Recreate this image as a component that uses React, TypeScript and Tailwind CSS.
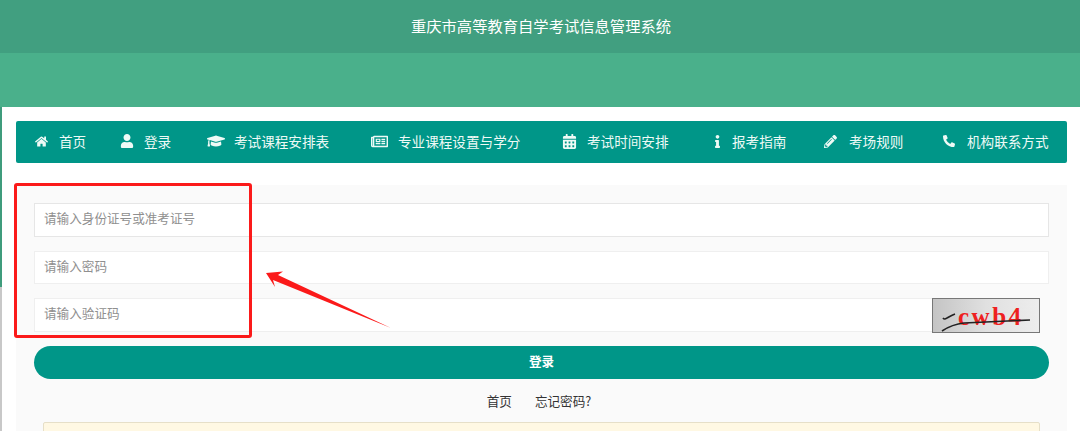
import React from "react";
import {
  FaCalendarAlt,
  FaGraduationCap,
  FaHome,
  FaInfo,
  FaPencilAlt,
  FaPhoneAlt,
  FaRegNewspaper,
  FaUser,
} from "react-icons/fa";

const navItems = [
  { label: "首页", icon: FaHome, box: "w-[24px]", size: 13, width: "w-[85px]" },
  { label: "登录", icon: FaUser, box: "w-[24px]", size: 14, width: "w-[87px]" },
  { label: "考试课程安排表", icon: FaGraduationCap, box: "w-[27px]", size: 18, width: "w-[164px]" },
  { label: "专业课程设置与学分", icon: FaRegNewspaper, box: "w-[27px]", size: 17, width: "w-[191px]" },
  { label: "考试时间安排", icon: FaCalendarAlt, box: "w-[25px]", size: 15, width: "w-[149px]" },
  { label: "报考指南", icon: FaInfo, box: "w-[21px]", size: 13, width: "w-[113px]" },
  { label: "考场规则", icon: FaPencilAlt, box: "w-[25px]", size: 13, width: "w-[119px]" },
  { label: "机构联系方式", icon: FaPhoneAlt, box: "w-[24px]", size: 12, width: "w-[107px]" },
];

const Captcha = () => (
  <svg width="108" height="35" viewBox="0 0 108 35" className="shrink-0">
    <defs>
      <linearGradient id="captchaBg" x1="0" y1="0" x2="1" y2="0">
        <stop offset="0" stopColor="#c4c4c4" />
        <stop offset="0.5" stopColor="#e0e0e0" />
        <stop offset="1" stopColor="#ededed" />
      </linearGradient>
    </defs>
    <rect x="0.5" y="0.5" width="107" height="34" fill="url(#captchaBg)" stroke="#777" />
    <text
      x="26"
      y="27"
      fill="#ee2020"
      fontSize="25"
      fontWeight="bold"
      letterSpacing="2.5"
      fontFamily="'Liberation Serif', serif"
    >
      cwb4
    </text>
    <path
      d="M11 20 C13 23 15 19 23 16 M10 33 C16 29 22 26 32 25 L98 22"
      fill="none"
      stroke="#222"
      strokeWidth="1.6"
    />
  </svg>
);

const App = () => {
  return (
    <div className="relative h-[431px] w-[1080px] overflow-hidden bg-white font-['Noto_Sans_CJK_SC','Noto_Sans',sans-serif] text-[14px]">
      <header className="flex h-[53px] items-center justify-center bg-[#419f80] pb-[3px] pl-[2px] text-[15.3px] text-white">
        重庆市高等教育自学考试信息管理系统
      </header>
      <div className="h-[54px] bg-[#4ab08b]" />

      <div className="flex h-[324px]">
        <div className="flex w-[2px] flex-col">
          <div className="h-[180px] bg-[#3f9c7c]" />
          <div className="flex-1 bg-[#c8c8c8]" />
        </div>

        <main className="w-[1065px] pl-[14px] pt-[14px]">
          <nav className="flex h-[42px] items-center rounded-[2px] bg-[#009688] pb-[2px] pl-[19px] text-[13.6px] text-[#eefaf6]">
            {navItems.map((item) => (
              <div key={item.label} className={`flex shrink-0 items-center ${item.width}`}>
                <span className={`flex shrink-0 justify-start ${item.box}`}>
                  <item.icon size={item.size} />
                </span>
                <span className="whitespace-nowrap leading-[20px]">{item.label}</span>
              </div>
            ))}
          </nav>

          <section className="mt-[22px] h-[300px] bg-[#fafafa] px-[18px] pt-[18px] text-[12.6px]">
            <input
              placeholder="请输入身份证号或准考证号"
              className="block h-[34px] w-full border border-[#e6e6e6] bg-white px-[9px] pb-[5px] outline-none placeholder:text-[#8f8f8f]"
            />
            <input
              placeholder="请输入密码"
              className="mt-[14px] block h-[33px] w-full border border-[#efefef] bg-white px-[9px] pb-[5px] outline-none placeholder:text-[#8f8f8f]"
            />
            <div className="mt-[14px] flex h-[35px] w-[1006px]">
              <input
                placeholder="请输入验证码"
                className="block h-[34px] min-w-0 flex-1 border border-r-0 border-[#efefef] bg-white px-[9px] pb-[5px] outline-none placeholder:text-[#8f8f8f]"
              />
              <Captcha />
            </div>
            <button className="mt-[13px] block h-[33px] w-full rounded-full bg-[#009688] pb-[3px] text-[12.6px] font-bold text-white">
              登录
            </button>
            <div className="mt-[11px] flex h-[20px] items-center justify-center gap-[23px] pt-[2px] pr-[5px] text-[#333]">
              <span>首页</span>
              <span>忘记密码?</span>
            </div>
            <div className="ml-[9px] mt-[12px] h-[40px] w-[997px] rounded-[2px] border border-[#e6dfc8] bg-[#fff8e3]" />
          </section>
        </main>
      </div>

      {/* 截图上的红色标注 */}
      <div className="absolute left-[14px] top-[183px] h-[155px] w-[238px] rounded-[3px] border-[3px] border-[#fb1a1a]" />
      <svg className="absolute left-[260px] top-[265px]" width="135" height="68" viewBox="0 0 135 68">
        <polygon points="6,8 23,6.5 18,10 131,63 13,15 15,22" fill="#fb1a1a" />
      </svg>
    </div>
  );
};

export default App;
